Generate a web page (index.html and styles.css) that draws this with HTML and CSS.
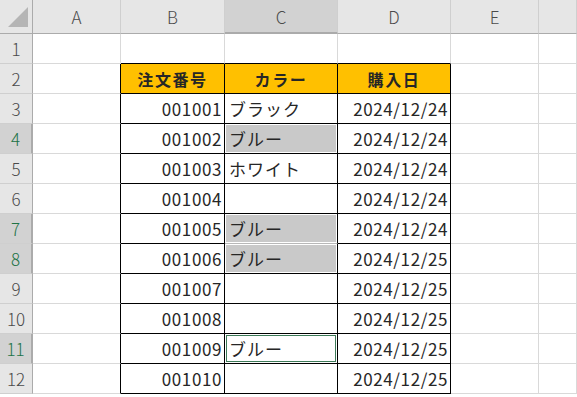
FILE: index.html
```html
<!DOCTYPE html>
<html lang="ja">
<head>
    <meta charset="UTF-8">
    <title>Sheet1</title>
    <link rel="stylesheet" href="styles.css">
</head>
<body>
    <div class="sheet">
        <div class="hd corner"><span class="tri"></span></div>
        <div class="hd col">A</div>
        <div class="hd col">B</div>
        <div class="hd col sel-col">C</div>
        <div class="hd col">D</div>
        <div class="hd col">E</div>
        <div class="hd col"></div>

        <div class="hd row">1</div>
        <div class="c"></div>
        <div class="c top-b"></div>
        <div class="c top-b"></div>
        <div class="c top-b"></div>
        <div class="c"></div>
        <div class="c"></div>

        <div class="hd row">2</div>
        <div class="c left-b"></div>
        <div class="c t head">注文番号</div>
        <div class="c t head">カラー</div>
        <div class="c t head">購入日</div>
        <div class="c"></div>
        <div class="c"></div>

        <div class="hd row">3</div>
        <div class="c left-b"></div>
        <div class="c t num">001001</div>
        <div class="c t txt">ブラック</div>
        <div class="c t num">2024/12/24</div>
        <div class="c"></div>
        <div class="c"></div>

        <div class="hd row sel-row">4</div>
        <div class="c left-b"></div>
        <div class="c t num">001002</div>
        <div class="c t txt fill">ブルー</div>
        <div class="c t num">2024/12/24</div>
        <div class="c"></div>
        <div class="c"></div>

        <div class="hd row">5</div>
        <div class="c left-b"></div>
        <div class="c t num">001003</div>
        <div class="c t txt">ホワイト</div>
        <div class="c t num">2024/12/24</div>
        <div class="c"></div>
        <div class="c"></div>

        <div class="hd row">6</div>
        <div class="c left-b"></div>
        <div class="c t num">001004</div>
        <div class="c t txt"></div>
        <div class="c t num">2024/12/24</div>
        <div class="c"></div>
        <div class="c"></div>

        <div class="hd row sel-row">7</div>
        <div class="c left-b"></div>
        <div class="c t num">001005</div>
        <div class="c t txt fill joined">ブルー</div>
        <div class="c t num">2024/12/24</div>
        <div class="c"></div>
        <div class="c"></div>

        <div class="hd row sel-row">8</div>
        <div class="c left-b"></div>
        <div class="c t num">001006</div>
        <div class="c t txt fill">ブルー</div>
        <div class="c t num">2024/12/25</div>
        <div class="c"></div>
        <div class="c"></div>

        <div class="hd row">9</div>
        <div class="c left-b"></div>
        <div class="c t num">001007</div>
        <div class="c t txt"></div>
        <div class="c t num">2024/12/25</div>
        <div class="c"></div>
        <div class="c"></div>

        <div class="hd row">10</div>
        <div class="c left-b"></div>
        <div class="c t num">001008</div>
        <div class="c t txt"></div>
        <div class="c t num">2024/12/25</div>
        <div class="c"></div>
        <div class="c"></div>

        <div class="hd row sel-row">11</div>
        <div class="c left-b"></div>
        <div class="c t num">001009</div>
        <div class="c t txt active">ブルー</div>
        <div class="c t num">2024/12/25</div>
        <div class="c"></div>
        <div class="c"></div>

        <div class="hd row">12</div>
        <div class="c left-b"></div>
        <div class="c t num">001010</div>
        <div class="c t txt"></div>
        <div class="c t num">2024/12/25</div>
        <div class="c"></div>
        <div class="c"></div>
    </div>
</body>
</html>
```

FILE: styles.css
```css
body {
    margin: 0;
    background-color: #fff;
    font-family: "Noto Sans CJK JP", "Noto Sans", sans-serif;
    overflow: hidden;
}
.sheet {
    display: grid;
    grid-template-columns: 33px 88px 104px 113px 113px 88px 1fr;
    grid-template-rows: 34px repeat(12, 30px);
    width: 577px;
}
.sheet > div {
    box-sizing: border-box;
    border-right: 1px solid #d9d9d9;
    border-bottom: 1px solid #d9d9d9;
    display: flex;
    align-items: center;
    white-space: nowrap;
    overflow: hidden;
}

/* headers */
.hd {
    background-color: #e6e6e6;
    color: #4a4a4a;
    font-size: 17px;
    font-weight: 300;
    justify-content: center;
}
.sheet > .hd.col {
    border-bottom-color: #ababab;
    border-right-color: #cfcfcf;
}
.sheet > .hd.row {
    border-right-color: #ababab;
    border-bottom-color: #cfcfcf;
}
.sheet > .corner {
    border-right-color: #ababab;
    border-bottom-color: #ababab;
    position: relative;
}
.tri {
    position: absolute;
    right: 4px;
    bottom: 6px;
    width: 0;
    height: 0;
    border-left: 20px solid transparent;
    border-bottom: 20px solid #b5b5b5;
}
.sheet > .sel-col {
    background-color: #d2d2d2;
    border-bottom: 2px solid #217346;
}
.sheet > .sel-row {
    background-color: #d2d2d2;
    color: #217346;
    border-right: 2px solid #217346;
}

/* cells */
.c {
    font-size: 17px;
    color: #262626;
    letter-spacing: 0.6px;
}
.sheet > .top-b {
    border-bottom-color: #000;
}
.sheet > .left-b {
    border-right-color: #000;
}
.sheet > .t {
    border-right-color: #000;
    border-bottom-color: #000;
}
.head {
    background-color: #ffc000;
    font-weight: 700;
    font-size: 16px;
    letter-spacing: 1.6px;
    justify-content: center;
}
.num {
    justify-content: flex-end;
    padding-right: 2px;
}
.txt {
    padding-left: 4px;
    letter-spacing: 1px;
}
.fill {
    background-color: #c9c9c9;
    box-shadow: inset 0 0 0 1px #fff;
}
.sheet > .joined {
    border-bottom-color: #b8b8b8;
}
.active {
    box-shadow: inset 0 0 0 1px #fff, inset 0 0 0 2px #3d7a58;
}
```
